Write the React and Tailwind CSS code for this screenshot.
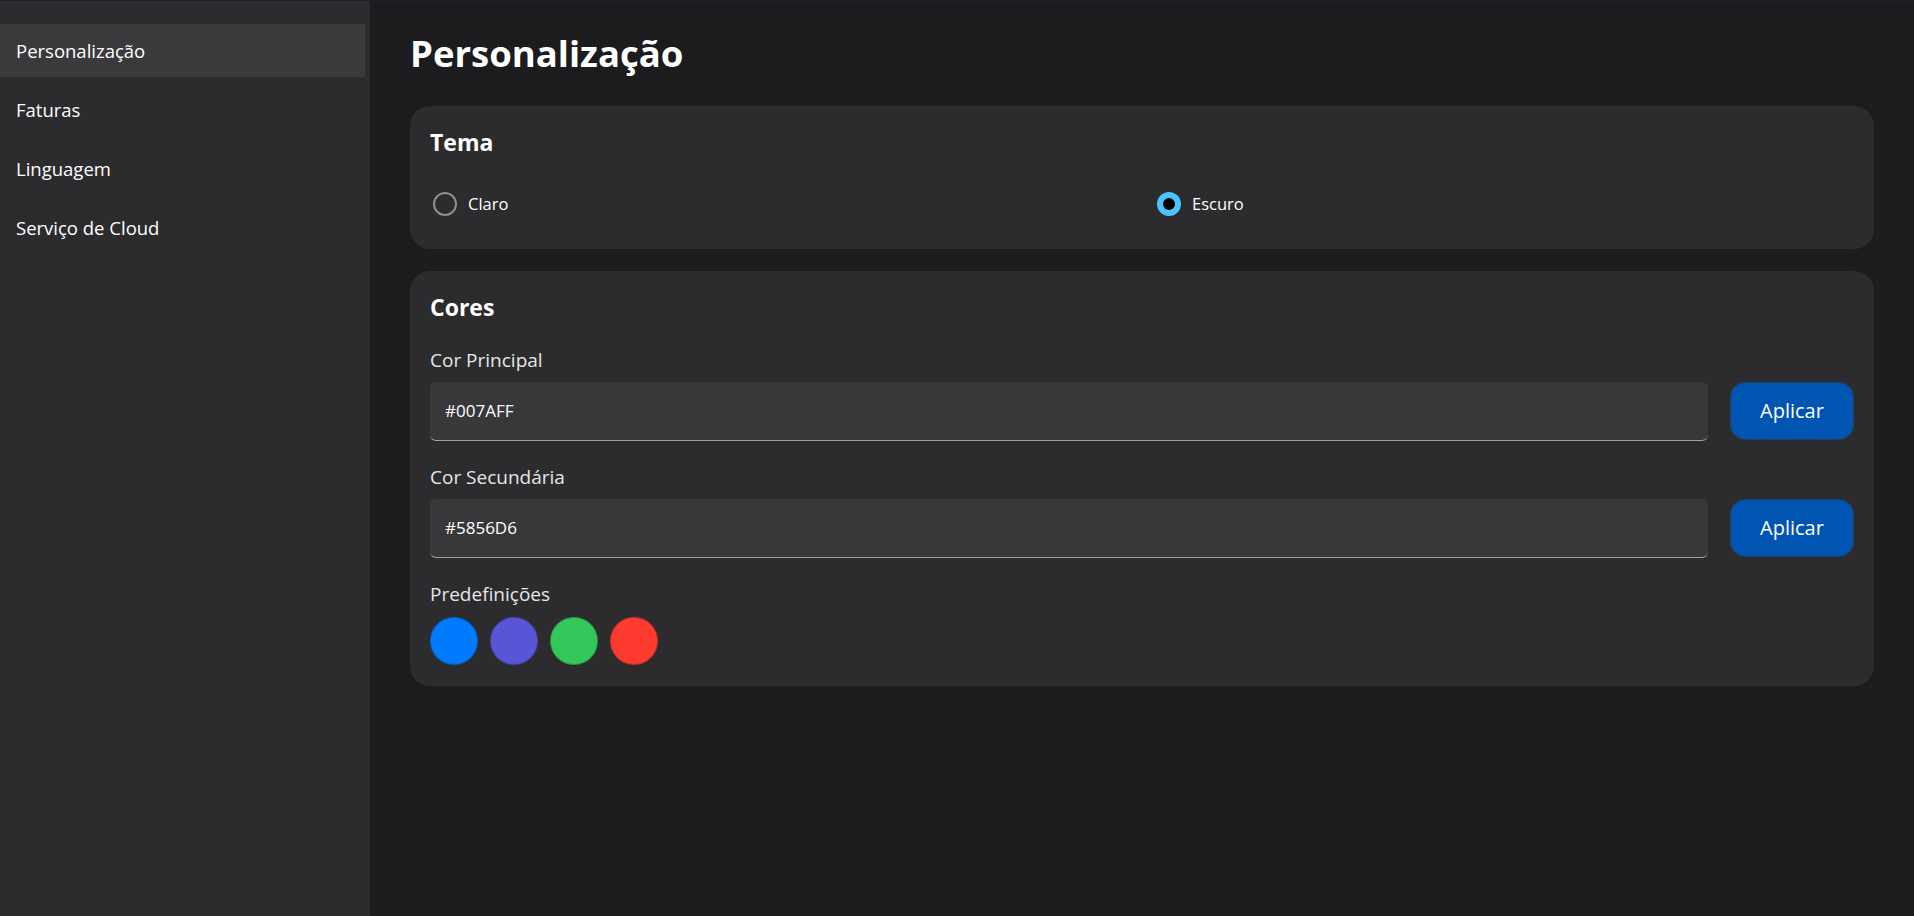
import { useState } from 'react'

const NAV = ['Personalização', 'Faturas', 'Linguagem', 'Serviço de Cloud']

const PRESETS = ['#007AFF', '#5856D6', '#34C759', '#FF3B30']

function Radio({ label, checked, onClick }) {
  return (
    <button type="button" onClick={onClick} className="flex items-center gap-[11px] text-left">
      {checked ? (
        <span className="ml-[3px] flex h-6 w-6 items-center justify-center rounded-full bg-[#4cc2ff]">
          <span className="h-3 w-3 rounded-full bg-black" />
        </span>
      ) : (
        <span className="ml-[3px] h-6 w-6 rounded-full border-2 border-[#8e8e8e]" />
      )}
      <span className="text-[16.5px] text-white">{label}</span>
    </button>
  )
}

function ColorField({ label, value }) {
  return (
    <div className="mb-[23px]">
      <p className="mb-[9px] text-[19px] leading-[26px] text-[#e6e6e6]">{label}</p>
      <div className="flex items-center gap-[22px]">
        <input
          readOnly
          value={value}
          className="h-[59px] flex-1 rounded-md border-b border-[#a0a0a0] bg-[#38383a] px-[15px] text-[17px] text-white outline-none"
        />
        <button
          type="button"
          className="h-[58px] w-[124px] rounded-[15px] border border-[#1f3f66] bg-[#0055b3] text-[20px] text-white"
        >
          Aplicar
        </button>
      </div>
    </div>
  )
}

export default function App() {
  const [active, setActive] = useState('Personalização')
  const [theme, setTheme] = useState('dark')

  return (
    <div
      className="flex h-[916px] w-full overflow-hidden border-t border-[#1a2133] bg-[#1c1c1e]"
      style={{ fontFamily: '"Open Sans", "Noto Sans", sans-serif' }}
    >
      <aside className="w-[370px] shrink-0 bg-[#2c2c2e] pt-[23px] pr-[5px]">
        <nav className="flex flex-col gap-[6px]">
          {NAV.map((item) => (
            <button
              key={item}
              type="button"
              onClick={() => setActive(item)}
              className={`h-[53px] px-4 text-left text-[18.5px] text-white ${
                active === item ? 'bg-[#3a3a3c]' : ''
              }`}
            >
              {item}
            </button>
          ))}
        </nav>
      </aside>

      <main className="flex-1 px-10 pt-[25px]">
        <h1 className="mb-[26px] text-[36.5px] font-bold leading-[54px] text-white">Personalização</h1>

        <section className="mb-[22px] rounded-[20px] bg-[#2c2c2e] px-5 pt-5 pb-8">
          <h2 className="mb-[34px] text-[23px] font-bold leading-8 text-white">Tema</h2>
          <div className="grid grid-cols-2 gap-6">
            <Radio label="Claro" checked={theme === 'light'} onClick={() => setTheme('light')} />
            <Radio label="Escuro" checked={theme === 'dark'} onClick={() => setTheme('dark')} />
          </div>
        </section>

        <section className="rounded-[20px] bg-[#2c2c2e] px-5 pt-5 pb-[21px]">
          <h2 className="mb-6 text-[23px] font-bold leading-8 text-white">Cores</h2>
          <ColorField label="Cor Principal" value="#007AFF" />
          <ColorField label="Cor Secundária" value="#5856D6" />
          <p className="mb-[10px] text-[19px] leading-[26px] text-[#e6e6e6]">Predefinições</p>
          <div className="flex gap-3">
            {PRESETS.map((c) => (
              <button
                key={c}
                type="button"
                className="h-12 w-12 rounded-full border border-black/20"
                style={{ backgroundColor: c }}
              />
            ))}
          </div>
        </section>
      </main>
    </div>
  )
}
